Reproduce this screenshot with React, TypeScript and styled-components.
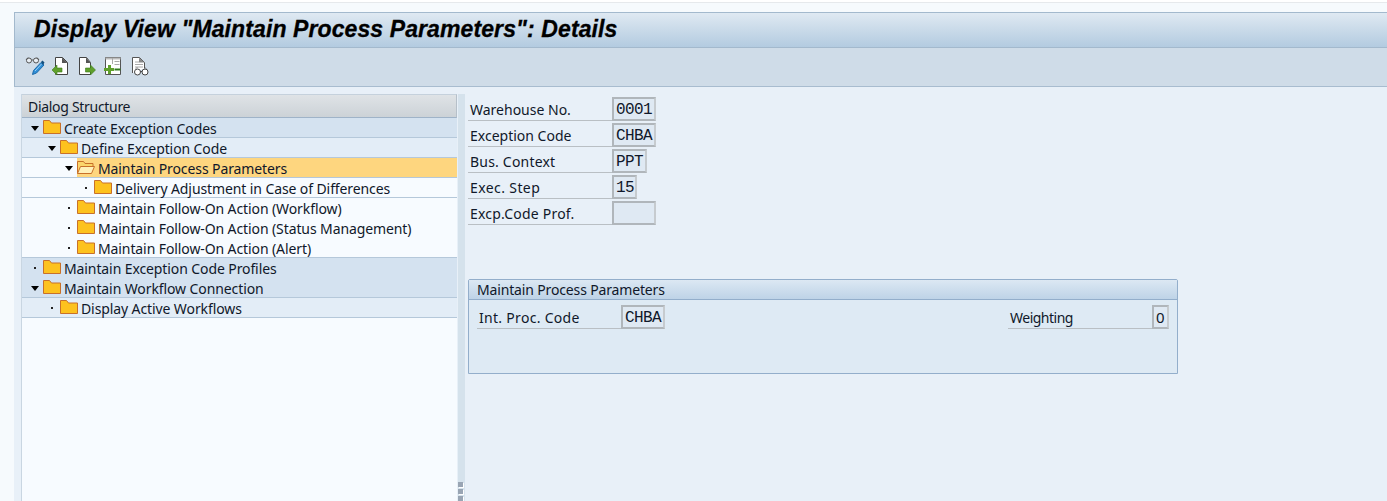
import styled, { createGlobalStyle } from 'styled-components';

const GlobalStyle = createGlobalStyle`
    html, body {
        margin: 0;
        padding: 0;
        height: 100%;
        overflow: hidden;
        background: #f6fafd;
        color: #10182a;
        font-family: "Noto Sans", "Open Sans", sans-serif;
        font-size: 14px;
    }
`;

const Page = styled.div`
    height: 501px;
    display: flex;
    flex-direction: column;
    padding-left: 14px;
`;

const TopStrip = styled.div`
    height: 12px;
    margin-left: -14px;
    flex: none;
    background: linear-gradient(#ffffff 0 2px, #e6e9ec 2px 3px, #f6fafd 3px);
`;

const TitleBar = styled.div`
    height: 36px;
    flex: none;
    padding: 0 0 2px 19px;
    display: flex;
    align-items: center;
    border-top: 1px solid #a3b9cd;
    border-left: 1px solid #a3b9cd;
    border-bottom: 1px solid #a3b9cd;
    box-sizing: border-box;
    background: linear-gradient(#dfe9f2, #b3cbe0);
`;

const Title = styled.h1`
    margin: 0;
    font: italic bold 23px "Liberation Sans", Arial, sans-serif;
    letter-spacing: 0.1px;
    color: #000;
    -webkit-text-stroke: 0.3px #000;
`;

const Toolbar = styled.div`
    height: 39px;
    flex: none;
    display: flex;
    align-items: flex-start;
    box-sizing: border-box;
    padding: 9px 0 0 9px;
    gap: 7px;
    background: #cfdce8;
    border-left: 1px solid #a3b9cd;
    border-bottom: 1px solid #a8bccf;
`;

const ToolButton = styled.svg`
    flex: none;
    width: 20px;
    height: 20px;
    overflow: visible;
`;

const Body = styled.div`
    flex: 1;
    min-height: 0;
    display: flex;
    background: #e8f0f8;
`;

const TreePanel = styled.div`
    width: 435px;
    margin-left: 7px;
    margin-top: 7px;
    flex: none;
    display: flex;
    flex-direction: column;
    background: #f7fbff;
    border-left: 1px solid #c9d6e2;
`;

const TreeHeader = styled.div`
    height: 24px;
    flex: none;
    box-sizing: border-box;
    padding: 1px 0 0 6px;
    display: flex;
    align-items: center;
    letter-spacing: -0.3px;
    background: linear-gradient(#dfe3e6, #ccd2d7);
    border-top: 1px solid #c5d1dc;
    border-right: 1px solid #b6c0c9;
    border-bottom: 1px solid #9fb3c8;
`;

const TreeRow = styled.div<{ $level: number; $tint: string; $line: boolean }>`
    height: 20px;
    box-sizing: border-box;
    display: flex;
    align-items: center;
    padding-top: 1px;
    padding-left: ${({ $level }) => 8 + $level * 17}px;
    letter-spacing: -0.1px;
    background: ${({ $tint }) => $tint};
    border-bottom: 1px solid ${({ $line }) => ($line ? '#b5c8da' : 'transparent')};
    white-space: nowrap;
`;

const Expander = styled.span`
    width: 13px;
    height: 14px;
    flex: none;
    display: flex;
    align-items: center;
    justify-content: center;
`;

const Arrow = styled.i`
    width: 0;
    height: 0;
    margin-left: -4px;
    border-left: 4px solid transparent;
    border-right: 4px solid transparent;
    border-top: 5px solid #000;
`;

const Dot = styled.i`
    width: 2px;
    height: 2px;
    margin-left: -3px;
    background: #222;
`;

const Selected = styled.span`
    display: flex;
    align-items: center;
    height: 19px;
    margin-top: -1px;
    padding-top: 1px;
    box-sizing: border-box;
    flex: 1;
    background: #fed67f;
`;

const FolderIcon = styled.svg`
    flex: none;
    width: 18px;
    height: 14px;
    margin: -3px 3px 0 0;
`;

const Splitter = styled.div`
    width: 7px;
    margin-top: 7px;
    margin-left: 1px;
    flex: none;
    display: flex;
    flex-direction: column;
    justify-content: flex-end;
    gap: 2px;
    background: #d5e2ec;
`;

const Grip = styled.i`
    display: block;
    width: 5px;
    height: 5px;
    background: #99a5b4;
    box-shadow: 1px 1px 0 #fff;
`;

const Detail = styled.div`
    flex: 1;
    padding: 10px 0 0 3px;
`;

const FieldStack = styled.div`
    display: flex;
    flex-direction: column;
    gap: 2px;
    width: 188px;
    margin-bottom: 54px;
`;

const FieldRow = styled.div`
    display: flex;
    height: 24px;
`;

const Label = styled.span<{ $spacing?: number }>`
    width: 144px;
    flex: none;
    box-sizing: border-box;
    padding: 2px 0 0 2px;
    line-height: 21px;
    letter-spacing: ${({ $spacing }) => $spacing ?? 0}px;
    border-bottom: 1px solid #b9bfc4;
`;

const ValueBox = styled.span<{ $width: number; $sans?: boolean }>`
    width: ${({ $width }) => $width}px;
    height: 24px;
    flex: none;
    box-sizing: border-box;
    padding-left: 2px;
    border: 2px solid #b4bac0;
    border-color: #b0b6bb #c6cbcf #b0b6bb #b0b6bb;
    background: #dfe9f3;
    color: #10182a;
    font: ${({ $sans }) => ($sans ? '15px/21px "Noto Sans", sans-serif' : '16px/22px "Liberation Mono", monospace')};
    letter-spacing: ${({ $sans }) => ($sans ? 0 : '-0.6px')};
    white-space: pre;
`;

const GroupBox = styled.section`
    width: 710px;
    height: 95px;
    box-sizing: border-box;
    border: 1px solid #93aecb;
    border-radius: 2px 2px 0 0;
    background: #deeaf4;
`;

const GroupTitle = styled.div`
    height: 20px;
    box-sizing: border-box;
    padding-left: 8px;
    line-height: 19px;
    letter-spacing: -0.15px;
    border-bottom: 1px solid #93aecb;
    background: linear-gradient(#dce8f3, #bed3e7);
`;

const GroupFields = styled.div`
    display: flex;
    justify-content: space-between;
    padding: 5px 8px 0;
`;

const Inline = styled.div`
    display: flex;
`;

const tints = { top: '#d4e2f0', mid: '#e3edf7', leaf: '#f7fbff' };

const Folder = ({ open }: { open?: boolean }) => (
    <FolderIcon viewBox="0 0 18 14">
        {open ? (
            <>
                <path d="M.5 13.500V1.500h6l1.500 2h8v3" fill="#fbd56b" stroke="#c8702a" />
                <path d="M.5 13.500l3-7h14l-3 7z" fill="#fff0b8" stroke="#c8702a" />
            </>
        ) : (
            <path d="M.5 13.500V.5h6l2 2.500h9v10.500z" fill="#fdc21e" stroke="#c8702a" />
        )}
    </FolderIcon>
);

type Node = { text: string; level: number; tint: string; line: boolean; branch?: boolean; selected?: boolean };

const nodes: Node[] = [
    { text: 'Create Exception Codes', level: 0, tint: tints.top, line: true, branch: true },
    { text: 'Define Exception Code', level: 1, tint: tints.mid, line: true, branch: true },
    { text: 'Maintain Process Parameters', level: 2, tint: tints.leaf, line: true, branch: true, selected: true },
    { text: 'Delivery Adjustment in Case of Differences', level: 3, tint: tints.leaf, line: true },
    { text: 'Maintain Follow-On Action (Workflow)', level: 2, tint: tints.leaf, line: false },
    { text: 'Maintain Follow-On Action (Status Management)', level: 2, tint: tints.leaf, line: false },
    { text: 'Maintain Follow-On Action (Alert)', level: 2, tint: tints.leaf, line: true },
    { text: 'Maintain Exception Code Profiles', level: 0, tint: tints.top, line: false },
    { text: 'Maintain Workflow Connection', level: 0, tint: tints.top, line: true, branch: true },
    { text: 'Display Active Workflows', level: 1, tint: tints.mid, line: true },
];

const fields = [
    { label: 'Warehouse No.', value: '0001', width: 44, spacing: 0 },
    { label: 'Exception Code', value: 'CHBA', width: 44, spacing: 0 },
    { label: 'Bus. Context', value: 'PPT', width: 35, spacing: 0.2 },
    { label: 'Exec. Step', value: '15', width: 25, spacing: 0.4 },
    { label: 'Excp.Code Prof.', value: '', width: 44, spacing: 0.2 },
];

export default function App() {
    return (
        <>
            <GlobalStyle />
            <Page>
                <TopStrip />
                <TitleBar>
                    <Title>Display View "Maintain Process Parameters": Details</Title>
                </TitleBar>
                <Toolbar>
                    <ToolButton viewBox="0 0 20 20">
                        <circle cx="5" cy="3.500" r="2.500" fill="#e8eef4" stroke="#555" />
                        <circle cx="12" cy="3.500" r="2.500" fill="#e8eef4" stroke="#555" />
                        <path d="M2 3L4 .5M15 3L13 .5M7.500 3h2" stroke="#555" fill="none" />
                        <path d="M8.500 17.500l1-4 7.500-8 3 2.500-7.500 8z" fill="#2f8fd8" stroke="#1d6aa8" />
                        <path d="M11 14l6.500-7" stroke="#9cd0f4" />
                        <path d="M17 5l1.500-1.500 2 2L19 8z" fill="#14507f" />
                    </ToolButton>
                    <ToolButton viewBox="0 0 20 20">
                        <path d="M4.500.5h7l5 5v12h-12z" fill="#fff" stroke="#444" />
                        <path d="M11 .5v5.500h5.500z" fill="#555" />
                        <path d="M1 13l5-5v3h5v4H6v3z" fill="#5fa02c" stroke="#3d7a1c" strokeWidth=".6" />
                    </ToolButton>
                    <ToolButton viewBox="0 0 20 20">
                        <path d="M1.500.5h7l4 5v12h-11z" fill="#fff" stroke="#444" />
                        <path d="M8 .5v5.500h4.500z" fill="#555" />
                        <path d="M17.500 13l-5-5v3h-5v4h5v3z" fill="#5fa02c" stroke="#3d7a1c" strokeWidth=".6" />
                    </ToolButton>
                    <ToolButton viewBox="0 0 20 20">
                        <path d="M.5.5h15v17H.5z" fill="#fff" stroke="#555" />
                        <path d="M.5.5h15v2H.5z" fill="#bbb" />
                        <path d="M7.500 1v6M9.500 4.500h5M9.500 7.500h5" stroke="#aaa" />
                        <path d="M9.500 12.500h6" stroke="#2f7a1c" strokeWidth="2" />
                        <path d="M3 8h3v3h3v3H6v3H3v-3H-1v-3h4z" fill="#5fa02c" />
                    </ToolButton>
                    <ToolButton viewBox="0 0 20 20">
                        <path d="M.5 16V.5h7l5 5v6" fill="#fff" stroke="#555" />
                        <path d="M7 .5v5h5.500z" fill="#888" />
                        <path d="M3 5h4M3 7.500h8M3 10h8" stroke="#aaa" />
                        <circle cx="5.500" cy="15" r="3" fill="#fff" stroke="#444" />
                        <circle cx="13" cy="15" r="3" fill="#fff" stroke="#444" />
                        <path d="M8.500 14.500h1.500M4 11.500l1-1M14 11.500l-1-1" stroke="#444" />
                    </ToolButton>
                </Toolbar>
                <Body>
                    <TreePanel>
                        <TreeHeader>Dialog Structure</TreeHeader>
                        {nodes.map(n => (
                            <TreeRow key={n.text} $level={n.level} $tint={n.tint} $line={n.line}>
                                <Expander>{n.branch ? <Arrow /> : <Dot />}</Expander>
                                {n.selected ? (
                                    <Selected>
                                        <Folder open />
                                        {n.text}
                                    </Selected>
                                ) : (
                                    <>
                                        <Folder />
                                        {n.text}
                                    </>
                                )}
                            </TreeRow>
                        ))}
                    </TreePanel>
                    <Splitter>
                        <Grip />
                        <Grip />
                        <Grip />
                    </Splitter>
                    <Detail>
                        <FieldStack>
                            {fields.map(f => (
                                <FieldRow key={f.label}>
                                    <Label $spacing={f.spacing}>{f.label}</Label>
                                    <ValueBox $width={f.width}>{f.value}</ValueBox>
                                </FieldRow>
                            ))}
                        </FieldStack>
                        <GroupBox>
                            <GroupTitle>Maintain Process Parameters</GroupTitle>
                            <GroupFields>
                                <Inline>
                                    <Label $spacing={0.3}>Int. Proc. Code</Label>
                                    <ValueBox $width={44}>CHBA</ValueBox>
                                </Inline>
                                <Inline>
                                    <Label $spacing={-0.5}>Weighting</Label>
                                    <ValueBox $width={17} $sans>0</ValueBox>
                                </Inline>
                            </GroupFields>
                        </GroupBox>
                    </Detail>
                </Body>
            </Page>
        </>
    );
}
